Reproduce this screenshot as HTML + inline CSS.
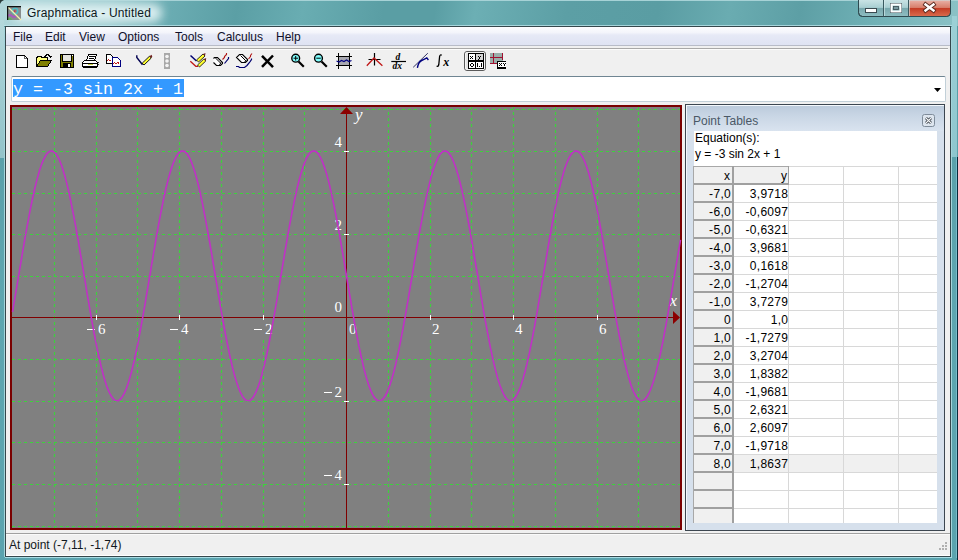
<!DOCTYPE html>
<html><head><meta charset="utf-8">
<style>
*{margin:0;padding:0;box-sizing:border-box}
html,body{width:958px;height:560px;overflow:hidden}
body{position:relative;background:#5a9fa9;font-family:"Liberation Sans",sans-serif;font-size:12px;color:#000}
.a{position:absolute;white-space:nowrap}
.t{line-height:14px}
#frame{left:0;top:0;width:958px;height:560px;background:linear-gradient(180deg,#5ba0a8 0,#579ca5 30px,#5ea6b0 300px,#5aa3ae 560px)}
#titlebar{left:0;top:0;width:958px;height:26px;background:linear-gradient(100deg,#b0d6da 0px,#98c8cc 110px,#6aacb2 170px,#5b9fa5 235px,#69adb2 300px,#5a9ea4 380px,#5a9ea4 430px,#6cafb4 470px,#5c9fa5 560px,#5a9da3 650px,#6aacb1 720px,#5d9fa5 790px,#6fb0b5 860px,#8ec4c8 958px)}
#glow{left:12px;top:4px;width:150px;height:18px;border-radius:9px;background:rgba(228,244,245,.9);filter:blur(5px)}
#title{left:27px;top:6px;color:#0c1820;letter-spacing:.18px}
#client{left:5px;top:26px;width:946px;height:531px;background:#f0f0f0;border:1px solid #35474c}
#menubar{left:6px;top:27px;width:944px;height:19px;background:linear-gradient(#fcfcfe 0,#f4f5fb 30%,#e6e9f6 45%,#dfe3f3 100%);border-bottom:1px solid #b8bcc8}
.mi{top:3px;color:#10102a}
</style></head><body>
<div id="frame" class="a"></div>
<div id="titlebar" class="a"></div>
<div class="a" style="left:0;top:20px;width:4px;height:138px;background:linear-gradient(#b4d8dc,#9ccacf 60%,#94c4ca)"></div>
<div class="a" style="left:952px;top:16px;width:5px;height:141px;background:linear-gradient(#9cd0d6,#8ec6ce)"></div>
<div class="a" style="left:0;top:0;width:958px;height:1px;background:#a6d2d6"></div>
<div id="glow" class="a"></div>
<!-- window icon -->
<svg class="a" style="left:7px;top:6px" width="15" height="15" viewBox="0 0 15 15">
<rect x="0" y="0" width="14" height="14" fill="#888e8e"/>
<path d="M1 10Q3 8 5 10T9 10" fill="none" stroke="#b050c8" stroke-width="1.6"/>
<path d="M1 12L4 12L5 14H1Z" fill="#60b060"/>
<circle cx="8" cy="5" r="2.8" fill="none" stroke="#48c0c8" stroke-width="1.3"/>
<path d="M6.8 4.8Q7.8 3.6 8.8 4.8L7.8 6.6Z" fill="#d02838"/>
<path d="M1 1L14 14" stroke="#f4f0b0" stroke-width="1.3"/>
<path d="M0 0h14v1.2H1.2V14H0z" fill="#101010"/>
</svg>
<div id="title" class="a t">Graphmatica - Untitled</div>
<!-- caption buttons -->
<svg class="a" style="left:857px;top:0" width="96" height="18" viewBox="0 0 96 18">
<defs>
<linearGradient id="gb" x1="0" y1="0" x2="0" y2="1"><stop offset="0" stop-color="#c9e3e5"/><stop offset=".45" stop-color="#a9cfd2"/><stop offset=".5" stop-color="#79a9ae"/><stop offset="1" stop-color="#8fbec2"/></linearGradient>
<linearGradient id="gr" x1="0" y1="0" x2="0" y2="1"><stop offset="0" stop-color="#e8b0a4"/><stop offset=".45" stop-color="#d8806c"/><stop offset=".5" stop-color="#c43c24"/><stop offset="1" stop-color="#d86a4c"/></linearGradient>
</defs>
<path d="M1.5 0V12.5a4 4 0 0 0 4 4H89.5a4 4 0 0 0 4-4V0" fill="url(#gb)" stroke="#3a5a60" stroke-width="1"/>
<path d="M51.5 0.5H93V12.5a3.5 3.5 0 0 1-3.5 3.5H51.5z" fill="url(#gr)"/>
<path d="M1.5 0V12.5a4 4 0 0 0 4 4H89.5a4 4 0 0 0 4-4V0" fill="none" stroke="#2e4a50" stroke-width="1"/>
<path d="M26.5 0V16.5M51.5 0V16.5" stroke="#3a5a60" stroke-width="1"/>
<path d="M27.5 0V16M52.5 0V16" stroke="#d8eef0" stroke-width="1" opacity=".6"/>
<rect x="8.5" y="8.5" width="11" height="4" fill="#fff" stroke="#3a4a50"/>
<rect x="33.5" y="3.5" width="11" height="9" fill="none" stroke="#3a4a50"/>
<rect x="34.5" y="4.5" width="9" height="7" fill="none" stroke="#fff" stroke-width="2"/>
<rect x="36.5" y="6.5" width="5" height="3" fill="#7a9aa0" stroke="#3a4a50" stroke-width=".8"/>
<path d="M68.5 4.5L76.5 10.5M76.5 4.5L68.5 10.5" stroke="#5a2a20" stroke-width="4.2" stroke-linecap="square"/><path d="M68.5 4.5L76.5 10.5M76.5 4.5L68.5 10.5" stroke="#fff" stroke-width="2.4" stroke-linecap="square"/>
</svg>
<div class="a" style="left:4px;top:25px;width:948px;height:1px;background:rgba(190,230,236,.75)"></div>
<div id="client" class="a"></div>
<div class="a" style="left:4px;top:27px;width:1px;height:530px;background:#a4d4da"></div>
<div class="a" style="left:951px;top:27px;width:1px;height:530px;background:#a4d4da"></div>
<div class="a" style="left:957px;top:157px;width:1px;height:403px;background:#0a2a3a"></div>
<div class="a" style="left:956px;top:157px;width:1px;height:401px;background:#78bccb"></div>
<svg class="a" style="left:0;top:0" width="6" height="6"><path d="M0 0H4Q1 1 0 4Z" fill="#2a3a3a"/></svg>
<div class="a" style="left:5px;top:557px;width:947px;height:1px;background:#a8dce4"></div>
<div class="a" style="left:6px;top:555px;width:944px;height:1px;background:#ffffff"></div>
<div id="menubar" class="a">
<span class="a t mi" style="left:7px">File</span>
<span class="a t mi" style="left:39px">Edit</span>
<span class="a t mi" style="left:73px">View</span>
<span class="a t mi" style="left:112px">Options</span>
<span class="a t mi" style="left:169px">Tools</span>
<span class="a t mi" style="left:211px">Calculus</span>
<span class="a t mi" style="left:270px">Help</span>
</div>
<div class="a" style="left:10px;top:48px;width:938px;height:1px;background:#a8a8a8"></div>
<div class="a" style="left:10px;top:49px;width:938px;height:1px;background:#fcfcfc"></div>
<svg class="a" style="left:0;top:48px" width="520" height="26" viewBox="0 48 520 26">
<g shape-rendering="crispEdges">
<!-- new doc -->
<path d="M16.5 55.5H24.5L27.5 58.5V67.5H16.5Z" fill="#fff" stroke="#000"/>
<path d="M24.5 55.5V58.5H27.5" fill="none" stroke="#000" stroke-width=".6"/>
<!-- open folder -->
<path d="M36.5 66.5V57.5H37.5V56.5H41.5V57.5H47.5V60.5" fill="#ffff80" stroke="#000"/>
<path d="M36.5 57.5H46.5V61.5H40.5L36.5 66.5Z" fill="#ffff80"/>
<path d="M36.5 66.5L40.5 60.5H51.5L47.5 66.5Z" fill="#808000" stroke="#000"/>
<path d="M44.5 57.5V56.5H45.5V55.5H46.5V54.5H48.5V55.5H49.5V56.5" fill="none" stroke="#000" stroke-width="1"/>
<path d="M49 56H52V57H51V58H50V57H49Z" fill="#000"/>
<!-- floppy -->
<rect x="60.5" y="54.5" width="13" height="13" fill="#808000" stroke="#000"/>
<rect x="63" y="55" width="8" height="6" fill="#e6e6e0"/>
<path d="M63 61.5H71" stroke="#000"/>
<path d="M62.5 55V61.5M71.5 55V61.5" stroke="#000"/>
<rect x="63" y="63" width="8" height="5" fill="#000"/>
<rect x="68" y="64" width="2" height="3" fill="#fff"/>
<rect x="72" y="55" width="1" height="1" fill="#fff"/>
<!-- printer -->
<path d="M88.5 54.5H96.5L94.5 60.5H86.5Z" fill="#fff" stroke="#000"/>
<path d="M89 56.5H95M88.5 58.5H93.5" stroke="#000" stroke-width="1"/>
<path d="M84.5 60.5H95.5L97.5 62.5V66.5L96.5 67.5H83.5L82.5 66.5V62.5Z" fill="#fff" stroke="#000"/>
<path d="M83 63.5H97M83 66H97" stroke="#000" stroke-width="1"/>
<path d="M88 64.8H93" stroke="#c8d040" stroke-width="1.2"/>
<path d="M96.5 60.5L98 62V66" fill="none" stroke="#000" stroke-width=".8" stroke-dasharray="1 1"/>
<!-- copy -->
<path d="M106.5 54.5H110.5L112.5 56.5V63.5H106.5Z" fill="#fff" stroke="#000"/>
<path d="M107 60.5L108.5 59.5L110 60.5L111.5 59.5" fill="none" stroke="#c01818" stroke-width="1"/>
<path d="M112.5 57.5H117.5L120.5 60.5V66.5H112.5Z" fill="#fff" stroke="#000080"/>
<path d="M113 63.5L114.5 62.5L116 63.5L117.5 62.5L119.5 63.5" fill="none" stroke="#c01818" stroke-width="1"/>
</g>
<!-- check pen -->
<path d="M136.8 55.2V57.5L142.5 64.8" fill="none" stroke="#000050" stroke-width="1.4"/>
<path d="M142.2 63.2L149.5 56.2L151.3 58L144 65Z" fill="#ffff30" stroke="#000" stroke-width=".9"/>
<path d="M149.5 56.2L151.5 54.8L152.3 56.6L151.3 58Z" fill="#702020"/>
<!-- disabled -->
<rect x="164" y="53" width="6" height="16" fill="#a8a8a8"/>
<circle cx="167" cy="56.5" r="1.8" fill="#f4f4f4"/><circle cx="167" cy="61" r="1.8" fill="#f4f4f4"/><circle cx="167" cy="65.5" r="1.8" fill="#f4f4f4"/>
<!-- multi pens -->
<path d="M190.5 55.5L196.5 61" fill="none" stroke="#000070" stroke-width="1.5"/>
<path d="M190.3 61.3L195.8 66.3H198" fill="none" stroke="#c01818" stroke-width="1.3"/>
<path d="M196.5 60L203 54L205 56L198.5 62Z" fill="#ffff30" stroke="#000" stroke-width=".8"/>
<path d="M203 54L205.5 53L205 56Z" fill="#702020"/>
<path d="M197.5 65L203.8 59L205.8 61L199.5 67Z" fill="#ffff30" stroke="#000" stroke-width=".8"/>
<path d="M203.8 59L206.2 58L205.8 61Z" fill="#702020"/>
<!-- eraser lines -->
<path d="M213.5 58.5L214.5 57.5H217.5L222.5 62.5V63.5L220.5 65.5H216.5L213.5 62.5" fill="#fff" stroke="#000" stroke-width="1.1"/>
<path d="M215.5 58L220.5 63M219.5 65L221 62.5" fill="none" stroke="#000" stroke-width="1"/>
<path d="M222.5 59.5L224.5 57.5V56.5L226.5 54.5V53" fill="none" stroke="#b01818" stroke-width="1.1"/>
<path d="M224.5 63.5L228.5 58.5V57" fill="none" stroke="#000070" stroke-width="1.2"/>
<!-- eraser curve -->
<path d="M239.5 54.5H242.5L247.5 59.5V60.5L245.5 62.5H241.5L236.5 57.5Z" fill="#fff" stroke="#000" stroke-width="1.1"/>
<path d="M240.5 55.5L245.5 60.5M244.5 62.5L246 60" fill="none" stroke="#000" stroke-width="1"/>
<path d="M248.5 59L250.5 56.5V55.5L252 53.5" fill="none" stroke="#b01818" stroke-width="1.1"/>
<path d="M236 66.5H238.5L239.5 67.5H244.5L247 65.5L249.5 62.5L251.5 59.5V58.5" fill="none" stroke="#000070" stroke-width="1.2"/>
<!-- X -->
<path d="M262 55.8L273 67.2M273 55.5L262 66.8" stroke="#000" stroke-width="2.5"/>
<!-- zoom in -->
<path d="M298.5 61.5L303.8 66.8" stroke="#000" stroke-width="2.2"/>
<circle cx="295.7" cy="58.2" r="3.9" fill="#80ffff" stroke="#000" stroke-width="1.4"/>
<path d="M293.5 58.2H298M295.7 56V60.5" stroke="#000" stroke-width="1"/>
<!-- zoom out -->
<path d="M321.5 61.5L326.8 66.8" stroke="#000" stroke-width="2.2"/>
<circle cx="318.5" cy="58.2" r="3.9" fill="#80ffff" stroke="#000" stroke-width="1.4"/>
<path d="M316.3 58.2H320.8" stroke="#000" stroke-width="1"/>
<!-- range -->
<rect x="338.5" y="56.5" width="11" height="9" fill="#a8a8b0" stroke="#c02020"/>
<path d="M338.5 53V69M349.5 53V69M336 56.5H352M336 65.5H352" stroke="#000" stroke-width="1"/>
<path d="M336.5 61L339 62L341.5 60.5L344 61.5L346.5 60L349 61.5L351.5 60.5" fill="none" stroke="#000080" stroke-width="1.2"/>
<!-- red crossing -->
<path d="M374.5 53V65.5M368.5 59.5H380.5" stroke="#000" stroke-width="1.2"/>
<path d="M366.8 65.7L374 58L382.4 65.7" fill="none" stroke="#c01818" stroke-width="1.3"/>
<!-- d/dx -->
<path d="M391.3 61.5H406" stroke="#000" stroke-width="1.2"/>
<text x="395.5" y="59.8" font-family="Liberation Serif" font-style="italic" font-weight="bold" font-size="9.5px" fill="#000">d</text>
<text x="392.5" y="68.8" font-family="Liberation Serif" font-style="italic" font-weight="bold" font-size="9.5px" fill="#000">dx</text>
<!-- tangent -->
<path d="M413.2 67.3L427.8 53.2" stroke="#000040" stroke-width=".8"/>
<path d="M417.4 67.8Q418.5 62 421.6 60.5T426.8 57.9L428.4 60" fill="none" stroke="#000080" stroke-width="1.4"/>
<!-- integral -->
<path d="M441.8 55.2Q440.2 54.2 439.6 56.5L438.8 64.5Q438.3 67 436.6 66" fill="none" stroke="#000" stroke-width="1.3"/>
<text x="443.3" y="66" font-family="Liberation Serif" font-style="italic" font-weight="bold" font-size="12px" fill="#000">x</text>
<!-- pressed -->
<rect x="464.5" y="51.5" width="21" height="19" rx="2.5" fill="#e4e4e4" stroke="#5a5a5a"/>
<rect x="465.5" y="52.5" width="19" height="17" rx="1.5" fill="none" stroke="#f8f8f8" stroke-width=".8"/>
<g shape-rendering="crispEdges">
<rect x="468" y="53" width="16" height="16" fill="#000"/>
<rect x="469" y="54" width="6" height="6" fill="#fff"/>
<rect x="476" y="54" width="7" height="6" fill="#d4d4d4"/>
<rect x="469" y="62" width="6" height="6" fill="#fff"/>
<rect x="476" y="62" width="7" height="6" fill="#fff"/>
<path d="M470 56h1v1h-1zM472 56h1v1h-1zM471 57h1v1h-1zM470 58h1v1h-1zM472 58h1v1h-1z" fill="#000"/>
<path d="M478 56h1v1h-1zM480 56h1v1h-1zM479 57h1v2h-1zM478 59h1v1h-1z" fill="#000"/>
<path d="M471 63h2v1h-2zM470 64h1v2h-1zM473 64h1v2h-1zM471 66h2v1h-2z" fill="#000"/>
<path d="M477 63h1v4h-1zM479 66h1v1h-1zM481 63h1v4h-1z" fill="#000"/>
</g>
<!-- table icon -->
<g shape-rendering="crispEdges">
<rect x="490" y="53" width="13" height="11" fill="#9aaeaa"/>
<rect x="490" y="57" width="13" height="1" fill="#a01030"/>
<rect x="493" y="53" width="1" height="11" fill="#a01030"/>
<rect x="502" y="53" width="1" height="7" fill="#a01030"/>
<rect x="490" y="63" width="7" height="1" fill="#a01030"/>
<rect x="497" y="61" width="9" height="8" fill="#000"/>
<rect x="498" y="62" width="8" height="5" fill="#fff"/>
<rect x="497" y="69" width="1" height="0" fill="#000"/>
<path d="M499 63h1v1h-1zM501 63h1v1h-1zM500 64h1v1h-1zM499 65h1v1h-1zM501 65h1v1h-1zM503 63h1v1h-1zM505 63h1v1h-1zM504 64h1v2h-1z" fill="#000"/>
</g>
</svg>

<!-- combo -->
<div class="a" style="left:11px;top:76px;width:935px;height:26px;background:#fff;border:1px solid #c2d0d8;border-top-color:#6f8592;border-radius:2px"></div>
<div class="a" style="left:13px;top:79px;width:171px;height:18px;background:#3399ff"></div>
<div class="a" style="left:13px;top:79.5px;font-family:'Liberation Mono',monospace;font-size:16.67px;color:#fff;white-space:pre;line-height:20px">y = -3 sin 2x + 1</div>
<svg class="a" style="left:933px;top:87px" width="9" height="6" viewBox="0 0 9 6"><path d="M1 1H8L4.5 5Z" fill="#000"/></svg>
<svg class="a" style="left:0;top:0" width="958" height="560" viewBox="0 0 958 560">
<rect x="11" y="106" width="670" height="423" fill="#808080" stroke="#7a0000" stroke-width="2"/>
<path d="M12 526.5H680M12 484.5H680M12 442.5H680M12 401.5H680M12 359.5H680M12 276.5H680M12 234.5H680M12 193.5H680M12 151.5H680M12 109.5H680" stroke="#3cd23c" stroke-width="1.15" stroke-dasharray="3 3" fill="none"/>
<path d="M54.5 107V528M96.5 107V528M137.5 107V528M179.5 107V528M221.5 107V528M263.5 107V528M304.5 107V528M388.5 107V528M430.5 107V528M471.5 107V528M513.5 107V528M555.5 107V528M597.5 107V528M638.5 107V528" stroke="#3cd23c" stroke-width="1.15" stroke-dasharray="3 3" stroke-dashoffset="1" fill="none"/>
<g fill="#808080"><rect x="86" y="318" width="22" height="21"/><rect x="169" y="318" width="22" height="21"/><rect x="253" y="318" width="22" height="21"/><rect x="429" y="318" width="13" height="21"/><rect x="512" y="318" width="13" height="21"/><rect x="596" y="318" width="13" height="21"/><rect x="351" y="107" width="14" height="19"/></g>
<path d="M346.5 112V528M12 317.5H674" stroke="#800000" stroke-width="1"/>
<path d="M346.5 107L340 114H353Z M680 317.5L673 311V324Z" fill="#8c0000"/>
<path d="M96.5 315V320M179.5 315V320M263.5 315V320M430.5 315V320M513.5 315V320M597.5 315V320M344 484.5H349M344 401.5H349M344 234.5H349M344 151.5H349" stroke="#ffffff" stroke-width="1"/>
<g fill="#fff" font-family="Liberation Serif" font-size="15px">
<text x="98" y="334" text-anchor="start">6</text>
<rect x="87" y="329" width="8" height="1"/>
<text x="181" y="334" text-anchor="start">4</text>
<rect x="170" y="329" width="8" height="1"/>
<text x="265" y="334" text-anchor="start">2</text>
<rect x="254" y="329" width="8" height="1"/>
<text x="432" y="334" text-anchor="start">2</text>
<text x="515" y="334" text-anchor="start">4</text>
<text x="599" y="334" text-anchor="start">6</text>
<text x="349" y="334">0</text>
<text x="342" y="480" text-anchor="end">4</text>
<rect x="324" y="475" width="8" height="1"/>
<text x="342" y="397" text-anchor="end">2</text>
<rect x="324" y="392" width="8" height="1"/>
<text x="342" y="230" text-anchor="end">2</text>
<text x="342" y="147" text-anchor="end">4</text>
<text x="342" y="312" text-anchor="end">0</text>
</g>
<text x="355" y="120.3" fill="#fff" font-family="Liberation Serif" font-style="italic" font-size="17px">y</text>
<text x="669.5" y="306" fill="#fff" font-family="Liberation Serif" font-style="italic" font-size="17px">x</text>
<path d="M12.5,311.8 L13.5,305.8 L14.6,299.7 L15.6,293.6 L16.7,287.4 L17.7,281.1 L18.8,274.9 L19.8,268.6 L20.9,262.4 L21.9,256.2 L22.9,250.1 L24.0,244.0 L25.0,238.0 L26.1,232.1 L27.1,226.3 L28.2,220.7 L29.2,215.1 L30.2,209.8 L31.3,204.5 L32.3,199.5 L33.4,194.7 L34.4,190.0 L35.5,185.6 L36.5,181.4 L37.6,177.4 L38.6,173.7 L39.6,170.3 L40.7,167.1 L41.7,164.1 L42.8,161.5 L43.8,159.1 L44.9,157.1 L45.9,155.3 L46.9,153.8 L48.0,152.7 L49.0,151.8 L50.1,151.2 L51.1,151.0 L52.2,151.1 L53.2,151.5 L54.2,152.2 L55.3,153.2 L56.3,154.5 L57.4,156.1 L58.4,158.0 L59.5,160.2 L60.5,162.7 L61.6,165.5 L62.6,168.6 L63.6,171.9 L64.7,175.5 L65.7,179.3 L66.8,183.4 L67.8,187.7 L68.9,192.3 L69.9,197.0 L70.9,201.9 L72.0,207.1 L73.0,212.4 L74.1,217.8 L75.1,223.4 L76.2,229.1 L77.2,235.0 L78.3,240.9 L79.3,247.0 L80.3,253.1 L81.4,259.2 L82.4,265.4 L83.5,271.7 L84.5,277.9 L85.6,284.2 L86.6,290.4 L87.6,296.6 L88.7,302.7 L89.7,308.7 L90.8,314.7 L91.8,320.6 L92.9,326.4 L93.9,332.0 L95.0,337.5 L96.0,342.9 L97.0,348.1 L98.1,353.1 L99.1,357.9 L100.2,362.5 L101.2,366.9 L102.3,371.0 L103.3,375.0 L104.3,378.6 L105.4,382.0 L106.4,385.2 L107.5,388.1 L108.5,390.7 L109.6,393.0 L110.6,395.0 L111.7,396.7 L112.7,398.1 L113.7,399.3 L114.8,400.1 L115.8,400.6 L116.9,400.7 L117.9,400.6 L119.0,400.2 L120.0,399.4 L121.0,398.4 L122.1,397.0 L123.1,395.3 L124.2,393.4 L125.2,391.1 L126.3,388.6 L127.3,385.7 L128.4,382.6 L129.4,379.2 L130.4,375.6 L131.5,371.7 L132.5,367.6 L133.6,363.3 L134.6,358.7 L135.7,353.9 L136.7,349.0 L137.8,343.8 L138.8,338.5 L139.8,333.0 L140.9,327.4 L141.9,321.6 L143.0,315.8 L144.0,309.8 L145.1,303.8 L146.1,297.6 L147.1,291.5 L148.2,285.3 L149.2,279.0 L150.3,272.8 L151.3,266.5 L152.4,260.3 L153.4,254.2 L154.5,248.0 L155.5,242.0 L156.5,236.0 L157.6,230.2 L158.6,224.4 L159.7,218.8 L160.7,213.3 L161.8,208.0 L162.8,202.8 L163.8,197.9 L164.9,193.1 L165.9,188.5 L167.0,184.2 L168.0,180.0 L169.1,176.2 L170.1,172.5 L171.2,169.2 L172.2,166.0 L173.2,163.2 L174.3,160.7 L175.3,158.4 L176.4,156.4 L177.4,154.8 L178.5,153.4 L179.5,152.3 L180.5,151.6 L181.6,151.1 L182.6,151.0 L183.7,151.2 L184.7,151.7 L185.8,152.5 L186.8,153.6 L187.8,155.0 L188.9,156.7 L189.9,158.7 L191.0,161.1 L192.0,163.6 L193.1,166.5 L194.1,169.7 L195.2,173.1 L196.2,176.8 L197.2,180.7 L198.3,184.8 L199.3,189.2 L200.4,193.8 L201.4,198.6 L202.5,203.6 L203.5,208.8 L204.5,214.2 L205.6,219.7 L206.6,225.3 L207.7,231.1 L208.7,237.0 L209.8,243.0 L210.8,249.0 L211.9,255.1 L212.9,261.3 L213.9,267.5 L215.0,273.8 L216.0,280.0 L217.1,286.3 L218.1,292.5 L219.2,298.6 L220.2,304.7 L221.2,310.8 L222.3,316.7 L223.3,322.6 L224.4,328.3 L225.4,333.9 L226.5,339.3 L227.5,344.6 L228.6,349.8 L229.6,354.7 L230.6,359.4 L231.7,364.0 L232.7,368.3 L233.8,372.4 L234.8,376.2 L235.9,379.8 L236.9,383.1 L238.0,386.2 L239.0,389.0 L240.0,391.5 L241.1,393.7 L242.1,395.6 L243.2,397.2 L244.2,398.6 L245.3,399.6 L246.3,400.3 L247.3,400.7 L248.4,400.7 L249.4,400.5 L250.5,400.0 L251.5,399.1 L252.6,397.9 L253.6,396.5 L254.6,394.7 L255.7,392.6 L256.7,390.3 L257.8,387.6 L258.8,384.7 L259.9,381.5 L260.9,378.1 L262.0,374.3 L263.0,370.4 L264.0,366.2 L265.1,361.8 L266.1,357.1 L267.2,352.3 L268.2,347.2 L269.3,342.0 L270.3,336.7 L271.4,331.1 L272.4,325.5 L273.4,319.7 L274.5,313.8 L275.5,307.8 L276.6,301.7 L277.6,295.6 L278.7,289.4 L279.7,283.2 L280.7,276.9 L281.8,270.7 L282.8,264.5 L283.9,258.3 L284.9,252.1 L286.0,246.0 L287.0,240.0 L288.0,234.0 L289.1,228.2 L290.1,222.5 L291.2,216.9 L292.2,211.5 L293.3,206.2 L294.3,201.1 L295.4,196.2 L296.4,191.5 L297.4,187.0 L298.5,182.8 L299.5,178.7 L300.6,174.9 L301.6,171.4 L302.7,168.1 L303.7,165.1 L304.8,162.3 L305.8,159.9 L306.8,157.7 L307.9,155.8 L308.9,154.3 L310.0,153.0 L311.0,152.0 L312.1,151.4 L313.1,151.1 L314.1,151.0 L315.2,151.3 L316.2,151.9 L317.3,152.8 L318.3,154.0 L319.4,155.6 L320.4,157.4 L321.4,159.5 L322.5,161.9 L323.5,164.6 L324.6,167.6 L325.6,170.8 L326.7,174.3 L327.7,178.1 L328.8,182.1 L329.8,186.3 L330.8,190.8 L331.9,195.4 L332.9,200.3 L334.0,205.4 L335.0,210.6 L336.1,216.0 L337.1,221.6 L338.1,227.2 L339.2,233.1 L340.2,239.0 L341.3,245.0 L342.3,251.1 L343.4,257.2 L344.4,263.4 L345.5,269.6 L346.5,275.9 L347.5,282.1 L348.6,288.3 L349.6,294.5 L350.7,300.7 L351.7,306.8 L352.8,312.8 L353.8,318.7 L354.8,324.5 L355.9,330.2 L356.9,335.7 L358.0,341.1 L359.0,346.4 L360.1,351.4 L361.1,356.3 L362.2,361.0 L363.2,365.5 L364.2,369.7 L365.3,373.7 L366.3,377.5 L367.4,381.0 L368.4,384.2 L369.5,387.2 L370.5,389.9 L371.6,392.3 L372.6,394.4 L373.6,396.2 L374.7,397.7 L375.7,398.9 L376.8,399.8 L377.8,400.4 L378.9,400.7 L379.9,400.7 L380.9,400.4 L382.0,399.7 L383.0,398.8 L384.1,397.5 L385.1,395.9 L386.2,394.0 L387.2,391.9 L388.2,389.4 L389.3,386.7 L390.3,383.7 L391.4,380.4 L392.4,376.8 L393.5,373.0 L394.5,369.0 L395.6,364.7 L396.6,360.2 L397.6,355.5 L398.7,350.6 L399.7,345.5 L400.8,340.2 L401.8,334.8 L402.9,329.2 L403.9,323.5 L405.0,317.7 L406.0,311.8 L407.0,305.8 L408.1,299.7 L409.1,293.5 L410.2,287.3 L411.2,281.1 L412.3,274.8 L413.3,268.6 L414.3,262.4 L415.4,256.2 L416.4,250.0 L417.5,244.0 L418.5,238.0 L419.6,232.1 L420.6,226.3 L421.7,220.6 L422.7,215.1 L423.7,209.7 L424.8,204.5 L425.8,199.5 L426.9,194.6 L427.9,190.0 L429.0,185.6 L430.0,181.4 L431.0,177.4 L432.1,173.7 L433.1,170.2 L434.2,167.0 L435.2,164.1 L436.3,161.5 L437.3,159.1 L438.3,157.0 L439.4,155.3 L440.4,153.8 L441.5,152.6 L442.5,151.8 L443.6,151.2 L444.6,151.0 L445.7,151.1 L446.7,151.5 L447.7,152.2 L448.8,153.2 L449.8,154.5 L450.9,156.1 L451.9,158.0 L453.0,160.3 L454.0,162.8 L455.0,165.6 L456.1,168.6 L457.1,171.9 L458.2,175.5 L459.2,179.4 L460.3,183.5 L461.3,187.8 L462.4,192.3 L463.4,197.0 L464.4,202.0 L465.5,207.1 L466.5,212.4 L467.6,217.9 L468.6,223.5 L469.7,229.2 L470.7,235.0 L471.8,241.0 L472.8,247.0 L473.8,253.1 L474.9,259.3 L475.9,265.5 L477.0,271.7 L478.0,278.0 L479.1,284.2 L480.1,290.4 L481.1,296.6 L482.2,302.7 L483.2,308.8 L484.3,314.8 L485.3,320.7 L486.4,326.4 L487.4,332.1 L488.5,337.6 L489.5,342.9 L490.5,348.1 L491.6,353.1 L492.6,357.9 L493.7,362.5 L494.7,366.9 L495.8,371.1 L496.8,375.0 L497.8,378.7 L498.9,382.1 L499.9,385.2 L501.0,388.1 L502.0,390.7 L503.1,393.0 L504.1,395.0 L505.2,396.7 L506.2,398.2 L507.2,399.3 L508.3,400.1 L509.3,400.6 L510.4,400.7 L511.4,400.6 L512.5,400.2 L513.5,399.4 L514.5,398.4 L515.6,397.0 L516.6,395.3 L517.7,393.3 L518.7,391.1 L519.8,388.5 L520.8,385.7 L521.8,382.6 L522.9,379.2 L523.9,375.6 L525.0,371.7 L526.0,367.6 L527.1,363.2 L528.1,358.7 L529.2,353.9 L530.2,348.9 L531.2,343.8 L532.3,338.4 L533.3,333.0 L534.4,327.3 L535.4,321.6 L536.5,315.7 L537.5,309.8 L538.5,303.7 L539.6,297.6 L540.6,291.4 L541.7,285.2 L542.7,279.0 L543.8,272.7 L544.8,266.5 L545.9,260.3 L546.9,254.1 L547.9,248.0 L549.0,241.9 L550.0,236.0 L551.1,230.1 L552.1,224.4 L553.2,218.7 L554.2,213.3 L555.2,207.9 L556.3,202.8 L557.3,197.8 L558.4,193.0 L559.4,188.5 L560.5,184.1 L561.5,180.0 L562.6,176.1 L563.6,172.5 L564.6,169.1 L565.7,166.0 L566.7,163.2 L567.8,160.6 L568.8,158.4 L569.9,156.4 L570.9,154.7 L572.0,153.4 L573.0,152.3 L574.0,151.6 L575.1,151.1 L576.1,151.0 L577.2,151.2 L578.2,151.7 L579.3,152.5 L580.3,153.6 L581.3,155.0 L582.4,156.7 L583.4,158.8 L584.5,161.1 L585.5,163.7 L586.6,166.6 L587.6,169.7 L588.7,173.1 L589.7,176.8 L590.7,180.7 L591.8,184.9 L592.8,189.3 L593.9,193.9 L594.9,198.7 L596.0,203.7 L597.0,208.9 L598.0,214.2 L599.1,219.7 L600.1,225.4 L601.2,231.1 L602.2,237.0 L603.3,243.0 L604.3,249.1 L605.3,255.2 L606.4,261.4 L607.4,267.6 L608.5,273.8 L609.5,280.1 L610.6,286.3 L611.6,292.5 L612.7,298.7 L613.7,304.8 L614.7,310.8 L615.8,316.8 L616.8,322.6 L617.9,328.3 L618.9,333.9 L620.0,339.4 L621.0,344.7 L622.0,349.8 L623.1,354.7 L624.1,359.5 L625.2,364.0 L626.2,368.3 L627.3,372.4 L628.3,376.2 L629.4,379.8 L630.4,383.2 L631.4,386.2 L632.5,389.0 L633.5,391.5 L634.6,393.7 L635.6,395.6 L636.7,397.3 L637.7,398.6 L638.8,399.6 L639.8,400.3 L640.8,400.7 L641.9,400.7 L642.9,400.5 L644.0,400.0 L645.0,399.1 L646.1,397.9 L647.1,396.5 L648.1,394.7 L649.2,392.6 L650.2,390.3 L651.3,387.6 L652.3,384.7 L653.4,381.5 L654.4,378.0 L655.5,374.3 L656.5,370.3 L657.5,366.1 L658.6,361.7 L659.6,357.1 L660.7,352.2 L661.7,347.2 L662.8,342.0 L663.8,336.6 L664.8,331.1 L665.9,325.4 L666.9,319.6 L668.0,313.7 L669.0,307.7 L670.1,301.7 L671.1,295.5 L672.2,289.3 L673.2,283.1 L674.2,276.9 L675.3,270.6 L676.3,264.4 L677.4,258.2 L678.4,252.0 L679.5,245.9 L680.5,239.9" stroke="#c030c6" stroke-width="1.6" fill="none" stroke-linejoin="round"/>
</svg>

<div class="a" style="left:685px;top:104px;width:260px;height:427px;border:1px solid #3c4650;background:#d6e0ec"></div>
<div class="a" style="left:686px;top:105px;width:258px;height:26px;background:linear-gradient(#bccbdc 0,#c9d6e5 40%,#d9e3ef 100%);border-top:1px solid #f4f8fc"></div>
<div class="a" style="left:686px;top:105px;width:1px;height:425px;background:#f4f8fc"></div>
<div class="a t" style="left:693px;top:114px;color:#4a5866">Point Tables</div>
<svg class="a" style="left:921px;top:114px" width="15" height="14" viewBox="0 0 15 14"><rect x="1.5" y=".5" width="12" height="12" rx="2" fill="#dde5ee" stroke="#7f8c9a"/><path d="M5 4L10 9M10 4L5 9" stroke="#2a3038" stroke-width="2.6"/><path d="M5 4L10 9M10 4L5 9" stroke="#f4f6f8" stroke-width="1.1"/></svg>
<div class="a" style="left:694px;top:131px;width:243px;height:392px;background:#fff"></div>
<div class="a t" style="left:695px;top:131px">Equation(s):</div>
<div class="a t" style="left:695px;top:147px">y = -3 sin 2x + 1</div>
<svg class="a" style="left:0;top:0" width="958" height="560" viewBox="0 0 958 560" shape-rendering="crispEdges">
<rect x="734" y="455" width="203" height="17" fill="#f0f0f0"/>
<rect x="694" y="166" width="94" height="17" fill="#f0f0f0"/>
<rect x="694" y="185" width="38" height="16" fill="#f0f0f0"/>
<rect x="694" y="203" width="38" height="16" fill="#f0f0f0"/>
<rect x="694" y="221" width="38" height="16" fill="#f0f0f0"/>
<rect x="694" y="239" width="38" height="16" fill="#f0f0f0"/>
<rect x="694" y="257" width="38" height="16" fill="#f0f0f0"/>
<rect x="694" y="275" width="38" height="16" fill="#f0f0f0"/>
<rect x="694" y="293" width="38" height="16" fill="#f0f0f0"/>
<rect x="694" y="311" width="38" height="16" fill="#f0f0f0"/>
<rect x="694" y="329" width="38" height="16" fill="#f0f0f0"/>
<rect x="694" y="347" width="38" height="16" fill="#f0f0f0"/>
<rect x="694" y="365" width="38" height="16" fill="#f0f0f0"/>
<rect x="694" y="383" width="38" height="16" fill="#f0f0f0"/>
<rect x="694" y="401" width="38" height="16" fill="#f0f0f0"/>
<rect x="694" y="419" width="38" height="16" fill="#f0f0f0"/>
<rect x="694" y="437" width="38" height="16" fill="#f0f0f0"/>
<rect x="694" y="455" width="38" height="16" fill="#f0f0f0"/>
<rect x="694" y="473" width="38" height="16" fill="#f0f0f0"/>
<rect x="694" y="491" width="38" height="16" fill="#f0f0f0"/>
<rect x="694" y="509" width="38" height="14" fill="#f0f0f0"/>
<rect x="788" y="166" width="1" height="357" fill="#d8d8d8"/>
<rect x="843" y="166" width="1" height="357" fill="#d8d8d8"/>
<rect x="898" y="166" width="1" height="357" fill="#d8d8d8"/>
<rect x="734" y="184" width="203" height="1" fill="#d8d8d8"/>
<rect x="734" y="202" width="203" height="1" fill="#d8d8d8"/>
<rect x="734" y="220" width="203" height="1" fill="#d8d8d8"/>
<rect x="734" y="238" width="203" height="1" fill="#d8d8d8"/>
<rect x="734" y="256" width="203" height="1" fill="#d8d8d8"/>
<rect x="734" y="274" width="203" height="1" fill="#d8d8d8"/>
<rect x="734" y="292" width="203" height="1" fill="#d8d8d8"/>
<rect x="734" y="310" width="203" height="1" fill="#d8d8d8"/>
<rect x="734" y="328" width="203" height="1" fill="#d8d8d8"/>
<rect x="734" y="346" width="203" height="1" fill="#d8d8d8"/>
<rect x="734" y="364" width="203" height="1" fill="#d8d8d8"/>
<rect x="734" y="382" width="203" height="1" fill="#d8d8d8"/>
<rect x="734" y="400" width="203" height="1" fill="#d8d8d8"/>
<rect x="734" y="418" width="203" height="1" fill="#d8d8d8"/>
<rect x="734" y="436" width="203" height="1" fill="#d8d8d8"/>
<rect x="734" y="454" width="203" height="1" fill="#d8d8d8"/>
<rect x="734" y="472" width="203" height="1" fill="#d8d8d8"/>
<rect x="734" y="490" width="203" height="1" fill="#d8d8d8"/>
<rect x="734" y="508" width="203" height="1" fill="#d8d8d8"/>
<rect x="694" y="166" width="243" height="1" fill="#d8d8d8"/>
<rect x="693" y="166" width="1" height="357" fill="#a8a8a8"/>
<rect x="694" y="166" width="94" height="1" fill="#a8a8a8"/>
<rect x="788" y="166" width="1" height="18" fill="#a0a0a0"/>
<rect x="732" y="166" width="2" height="357" fill="#a0a0a0"/>
<rect x="694" y="183" width="95" height="2" fill="#a0a0a0"/>
<rect x="694" y="201" width="38" height="2" fill="#a0a0a0"/>
<rect x="694" y="219" width="38" height="2" fill="#a0a0a0"/>
<rect x="694" y="237" width="38" height="2" fill="#a0a0a0"/>
<rect x="694" y="255" width="38" height="2" fill="#a0a0a0"/>
<rect x="694" y="273" width="38" height="2" fill="#a0a0a0"/>
<rect x="694" y="291" width="38" height="2" fill="#a0a0a0"/>
<rect x="694" y="309" width="38" height="2" fill="#a0a0a0"/>
<rect x="694" y="327" width="38" height="2" fill="#a0a0a0"/>
<rect x="694" y="345" width="38" height="2" fill="#a0a0a0"/>
<rect x="694" y="363" width="38" height="2" fill="#a0a0a0"/>
<rect x="694" y="381" width="38" height="2" fill="#a0a0a0"/>
<rect x="694" y="399" width="38" height="2" fill="#a0a0a0"/>
<rect x="694" y="417" width="38" height="2" fill="#a0a0a0"/>
<rect x="694" y="435" width="38" height="2" fill="#a0a0a0"/>
<rect x="694" y="453" width="38" height="2" fill="#a0a0a0"/>
<rect x="694" y="471" width="38" height="2" fill="#a0a0a0"/>
<rect x="694" y="489" width="38" height="2" fill="#a0a0a0"/>
<rect x="694" y="507" width="38" height="2" fill="#a0a0a0"/>
</svg>
<div class="a t" style="left:694px;top:169px;width:36px;text-align:right">x</div>
<div class="a t" style="left:734px;top:169px;width:53px;text-align:right">y</div>
<div class="a t" style="left:694px;top:187px;width:37px;text-align:right;letter-spacing:.3px">-7,0</div>
<div class="a t" style="left:734px;top:187px;width:54.3px;text-align:right;letter-spacing:.3px">3,9718</div>
<div class="a t" style="left:694px;top:205px;width:37px;text-align:right;letter-spacing:.3px">-6,0</div>
<div class="a t" style="left:734px;top:205px;width:54.3px;text-align:right;letter-spacing:.3px">-0,6097</div>
<div class="a t" style="left:694px;top:223px;width:37px;text-align:right;letter-spacing:.3px">-5,0</div>
<div class="a t" style="left:734px;top:223px;width:54.3px;text-align:right;letter-spacing:.3px">-0,6321</div>
<div class="a t" style="left:694px;top:241px;width:37px;text-align:right;letter-spacing:.3px">-4,0</div>
<div class="a t" style="left:734px;top:241px;width:54.3px;text-align:right;letter-spacing:.3px">3,9681</div>
<div class="a t" style="left:694px;top:259px;width:37px;text-align:right;letter-spacing:.3px">-3,0</div>
<div class="a t" style="left:734px;top:259px;width:54.3px;text-align:right;letter-spacing:.3px">0,1618</div>
<div class="a t" style="left:694px;top:277px;width:37px;text-align:right;letter-spacing:.3px">-2,0</div>
<div class="a t" style="left:734px;top:277px;width:54.3px;text-align:right;letter-spacing:.3px">-1,2704</div>
<div class="a t" style="left:694px;top:295px;width:37px;text-align:right;letter-spacing:.3px">-1,0</div>
<div class="a t" style="left:734px;top:295px;width:54.3px;text-align:right;letter-spacing:.3px">3,7279</div>
<div class="a t" style="left:694px;top:313px;width:37px;text-align:right;letter-spacing:.3px">0</div>
<div class="a t" style="left:734px;top:313px;width:54.3px;text-align:right;letter-spacing:.3px">1,0</div>
<div class="a t" style="left:694px;top:331px;width:37px;text-align:right;letter-spacing:.3px">1,0</div>
<div class="a t" style="left:734px;top:331px;width:54.3px;text-align:right;letter-spacing:.3px">-1,7279</div>
<div class="a t" style="left:694px;top:349px;width:37px;text-align:right;letter-spacing:.3px">2,0</div>
<div class="a t" style="left:734px;top:349px;width:54.3px;text-align:right;letter-spacing:.3px">3,2704</div>
<div class="a t" style="left:694px;top:367px;width:37px;text-align:right;letter-spacing:.3px">3,0</div>
<div class="a t" style="left:734px;top:367px;width:54.3px;text-align:right;letter-spacing:.3px">1,8382</div>
<div class="a t" style="left:694px;top:385px;width:37px;text-align:right;letter-spacing:.3px">4,0</div>
<div class="a t" style="left:734px;top:385px;width:54.3px;text-align:right;letter-spacing:.3px">-1,9681</div>
<div class="a t" style="left:694px;top:403px;width:37px;text-align:right;letter-spacing:.3px">5,0</div>
<div class="a t" style="left:734px;top:403px;width:54.3px;text-align:right;letter-spacing:.3px">2,6321</div>
<div class="a t" style="left:694px;top:421px;width:37px;text-align:right;letter-spacing:.3px">6,0</div>
<div class="a t" style="left:734px;top:421px;width:54.3px;text-align:right;letter-spacing:.3px">2,6097</div>
<div class="a t" style="left:694px;top:439px;width:37px;text-align:right;letter-spacing:.3px">7,0</div>
<div class="a t" style="left:734px;top:439px;width:54.3px;text-align:right;letter-spacing:.3px">-1,9718</div>
<div class="a t" style="left:694px;top:457px;width:37px;text-align:right;letter-spacing:.3px">8,0</div>
<div class="a t" style="left:734px;top:457px;width:54.3px;text-align:right;letter-spacing:.3px">1,8637</div>
<div class="a" style="left:6px;top:533px;width:944px;height:1px;background:#a0a0a0"></div>
<div class="a" style="left:6px;top:534px;width:944px;height:1px;background:#fafafa"></div>
<div class="a t" style="left:9px;top:538px;color:#101820">At point (-7,11, -1,74)</div>
<svg class="a" style="left:937px;top:540px" width="12" height="12" viewBox="0 0 12 12"><g fill="#b0b0b0"><rect x="8" y="2" width="2" height="2"/><rect x="5" y="5" width="2" height="2"/><rect x="8" y="5" width="2" height="2"/><rect x="2" y="8" width="2" height="2"/><rect x="5" y="8" width="2" height="2"/><rect x="8" y="8" width="2" height="2"/></g></svg>
</body></html>
